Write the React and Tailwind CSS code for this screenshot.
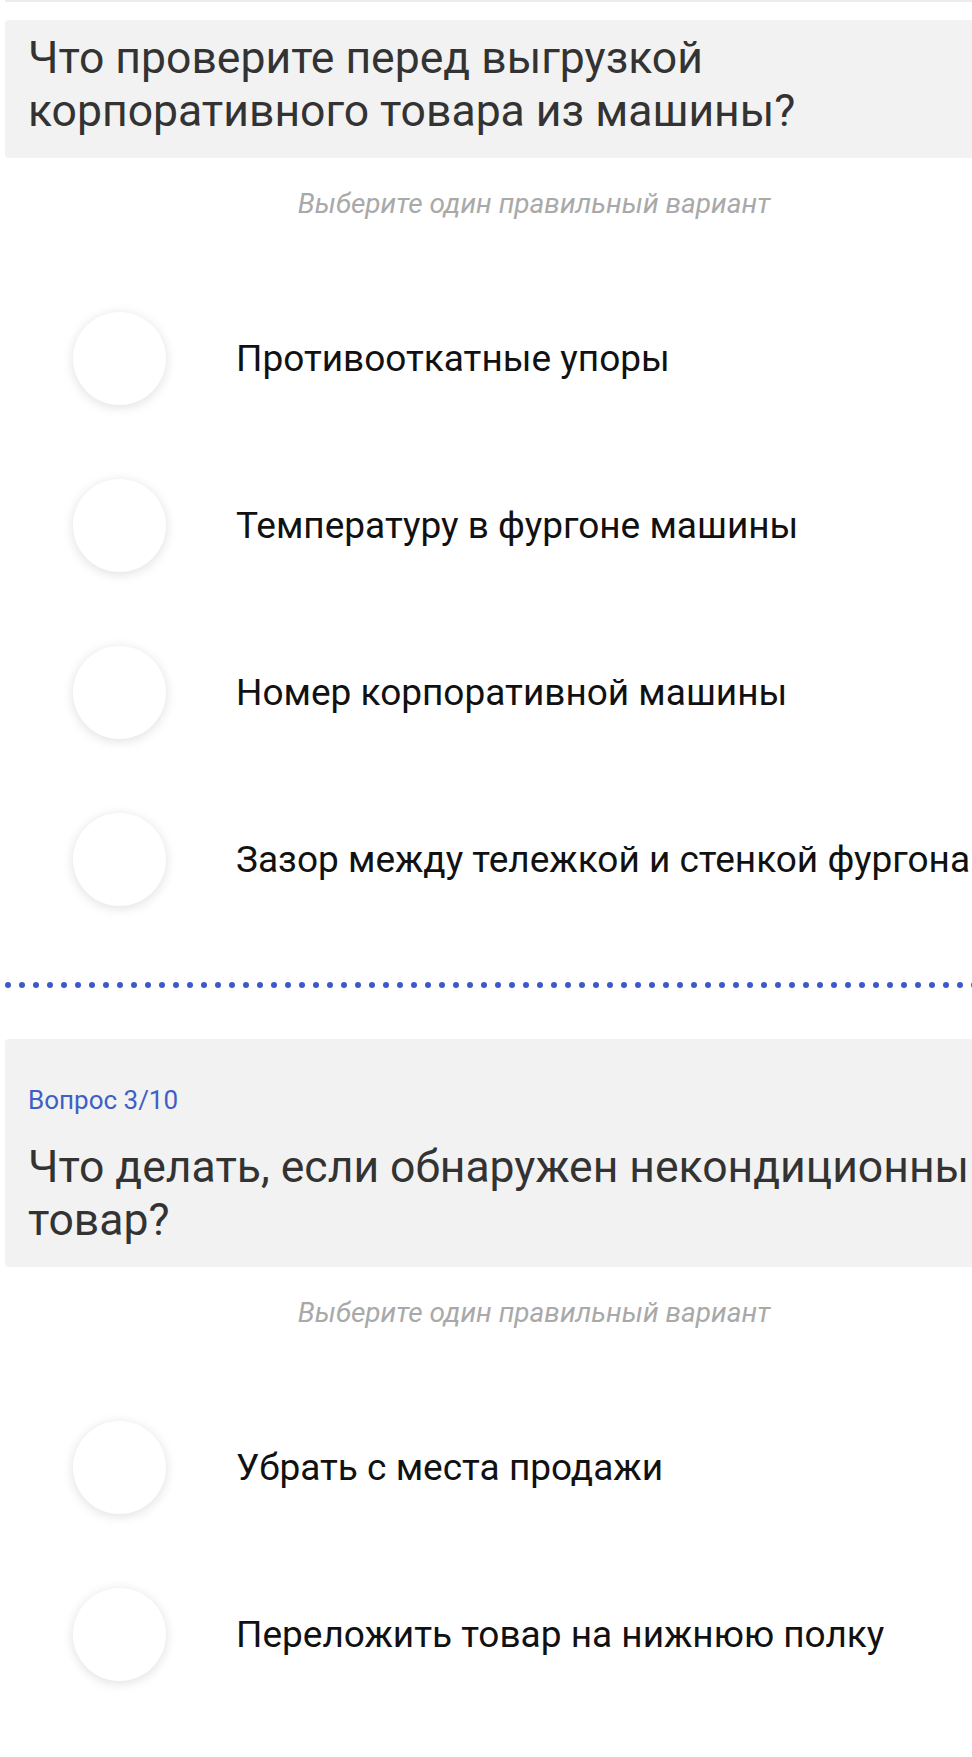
const questions = [
  {
    label: null,
    title: ["Что проверите перед выгрузкой", "корпоративного товара из машины?"],
    options: [
      "Противооткатные упоры",
      "Температуру в фургоне машины",
      "Номер корпоративной машины",
      "Зазор между тележкой и стенкой фургона",
    ],
  },
  {
    label: "Вопрос 3/10",
    title: ["Что делать, если обнаружен некондиционный", "товар?"],
    options: ["Убрать с места продажи", "Переложить товар на нижнюю полку"],
  },
];

function Option({ text }) {
  return (
    <label className="flex h-[167px] items-center cursor-pointer">
      <span className="ml-[73px] h-[93px] w-[93px] shrink-0 rounded-full bg-white shadow-[0_2px_12px_rgba(0,0,0,0.13)]" />
      <span className="ml-[70px] whitespace-nowrap text-[37px] leading-[44px] text-[#111]">
        {text}
      </span>
    </label>
  );
}

function Question({ q }) {
  return (
    <section>
      <div
        className={`mx-[5px] rounded-[4px] bg-[#f2f2f2] pl-[23px] pr-6 pb-[20px] ${
          q.label ? "pt-[47px]" : "pt-[12px]"
        }`}
      >
        {q.label && (
          <div className="mb-[27px] text-[26px] leading-[28px] text-[#3f5fc4]">
            {q.label}
          </div>
        )}
        <h2 className="text-[44.5px] leading-[53px] text-[#333]">
          {q.title.map((line) => (
            <div key={line} className="whitespace-nowrap">
              {line}
            </div>
          ))}
        </h2>
      </div>
      <p className="mt-[30px] mb-[55px] text-center text-[28px] italic leading-[32px] text-[#a9a9a9]">
        Выберите один правильный вариант
      </p>
      <div>
        {q.options.map((o) => (
          <Option key={o} text={o} />
        ))}
      </div>
    </section>
  );
}

export default function App() {
  return (
    <div className="h-[1757px] w-[972px] overflow-hidden bg-white font-['Roboto',sans-serif]">
      <div className="w-[1068px]">
        <div className="mx-[5px] h-[2px] bg-[#ececec]" />
        <div className="h-[18px]" />
        <Question q={questions[0]} />
        <div className="mt-[39px] mb-[51px] flex gap-[8px] pl-[5px]">
          {Array.from({ length: 76 }).map((_, i) => (
            <span key={i} className="h-[6px] w-[6px] shrink-0 rounded-full bg-[#3d58cf]" />
          ))}
        </div>
        <Question q={questions[1]} />
      </div>
    </div>
  );
}
